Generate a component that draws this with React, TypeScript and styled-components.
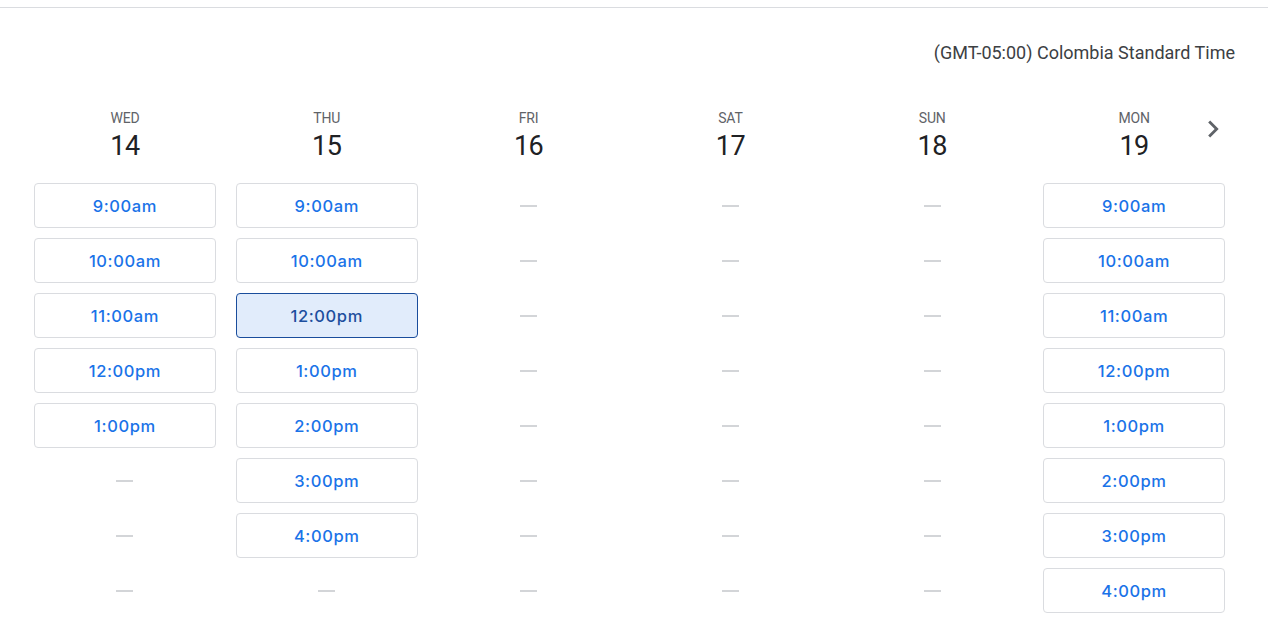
import React from "react";
import styled, { createGlobalStyle } from "styled-components";

const Global = createGlobalStyle`
  html, body { margin: 0; padding: 0; background: #fff; }
  body { font-family: Roboto, "Liberation Sans", sans-serif; }
`;

const Page = styled.div`
  width: 1268px;
  height: 637px;
  overflow: hidden;
  padding-top: 7px;
  box-sizing: border-box;
`;

const Divider = styled.div`
  height: 1px;
  background: #dadce0;
`;

const TimezoneRow = styled.div`
  display: flex;
  justify-content: flex-end;
  margin-top: 32px;
  padding-right: 33px;
  font-size: 18px;
  line-height: 26px;
  color: #3c4043;
  letter-spacing: 0;
`;

const CalendarArea = styled.div`
  position: relative;
  margin-top: 42px;
  margin-left: 24px;
  width: 1211px;
`;

const Grid = styled.div`
  display: grid;
  grid-template-columns: repeat(6, 1fr);
`;

const Column = styled.div`
  display: flex;
  flex-direction: column;
  align-items: center;
`;

const DayHeader = styled.div`
  display: flex;
  flex-direction: column;
  align-items: center;
  gap: 2px;
  margin-bottom: 20px;
`;

const DayName = styled.div`
  font-size: 14px;
  line-height: 20px;
  color: #5f6368;
  font-weight: 400;
  letter-spacing: -0.2px;
`;

const DayNumber = styled.div`
  font-size: 27px;
  line-height: 33px;
  color: #202124;
  font-weight: 400;
  letter-spacing: -0.5px;
`;

const Slots = styled.div`
  display: flex;
  flex-direction: column;
  gap: 10px;
  width: 182px;
`;

const SlotButton = styled.button<{ $selected?: boolean }>`
  height: 45px;
  width: 100%;
  box-sizing: border-box;
  border-radius: 4px;
  border: 1px solid ${(p) => (p.$selected ? "#1a4d9c" : "#dadce0")};
  background: ${(p) => (p.$selected ? "#e1ecfb" : "#fff")};
  color: ${(p) => (p.$selected ? "#1d4f9e" : "#1a73e8")};
  font-family: Inter, Roboto, sans-serif;
  font-weight: 500;
  font-size: 16.5px;
  letter-spacing: 0.6px;
  padding: 0;
  cursor: pointer;
`;

const EmptySlot = styled.div`
  height: 45px;
  display: flex;
  align-items: center;
  justify-content: center;
  &::after {
    content: "";
    width: 17px;
    height: 2px;
    background: #d3d5d8;
  }
`;

const NextButton = styled.button`
  position: absolute;
  top: 4px;
  right: 5px;
  width: 34px;
  height: 34px;
  padding: 0;
  border: none;
  background: transparent;
  display: flex;
  align-items: center;
  justify-content: center;
  cursor: pointer;
`;

type Day = { name: string; num: number; slots: (string | null)[] };

const days: Day[] = [
  { name: "WED", num: 14, slots: ["9:00am", "10:00am", "11:00am", "12:00pm", "1:00pm", null, null, null] },
  { name: "THU", num: 15, slots: ["9:00am", "10:00am", "12:00pm", "1:00pm", "2:00pm", "3:00pm", "4:00pm", null] },
  { name: "FRI", num: 16, slots: [null, null, null, null, null, null, null, null] },
  { name: "SAT", num: 17, slots: [null, null, null, null, null, null, null, null] },
  { name: "SUN", num: 18, slots: [null, null, null, null, null, null, null, null] },
  { name: "MON", num: 19, slots: ["9:00am", "10:00am", "11:00am", "12:00pm", "1:00pm", "2:00pm", "3:00pm", "4:00pm"] },
];

export default function App() {
  return (
    <>
      <Global />
      <Page>
        <Divider />
        <TimezoneRow>(GMT-05:00) Colombia Standard Time</TimezoneRow>
        <CalendarArea>
          <Grid>
            {days.map((d, di) => (
              <Column key={d.name}>
                <DayHeader>
                  <DayName>{d.name}</DayName>
                  <DayNumber>{d.num}</DayNumber>
                </DayHeader>
                <Slots>
                  {d.slots.map((s, i) =>
                    s ? (
                      <SlotButton key={i} $selected={di === 1 && s === "12:00pm"}>
                        {s}
                      </SlotButton>
                    ) : (
                      <EmptySlot key={i} />
                    )
                  )}
                </Slots>
              </Column>
            ))}
          </Grid>
          <NextButton aria-label="Next week">
            <svg width="34" height="34" viewBox="0 0 24 24">
              <path d="M10 6L8.59 7.41 13.17 12l-4.58 4.59L10 18l6-6z" fill="#5f6368" />
            </svg>
          </NextButton>
        </CalendarArea>
      </Page>
    </>
  );
}
